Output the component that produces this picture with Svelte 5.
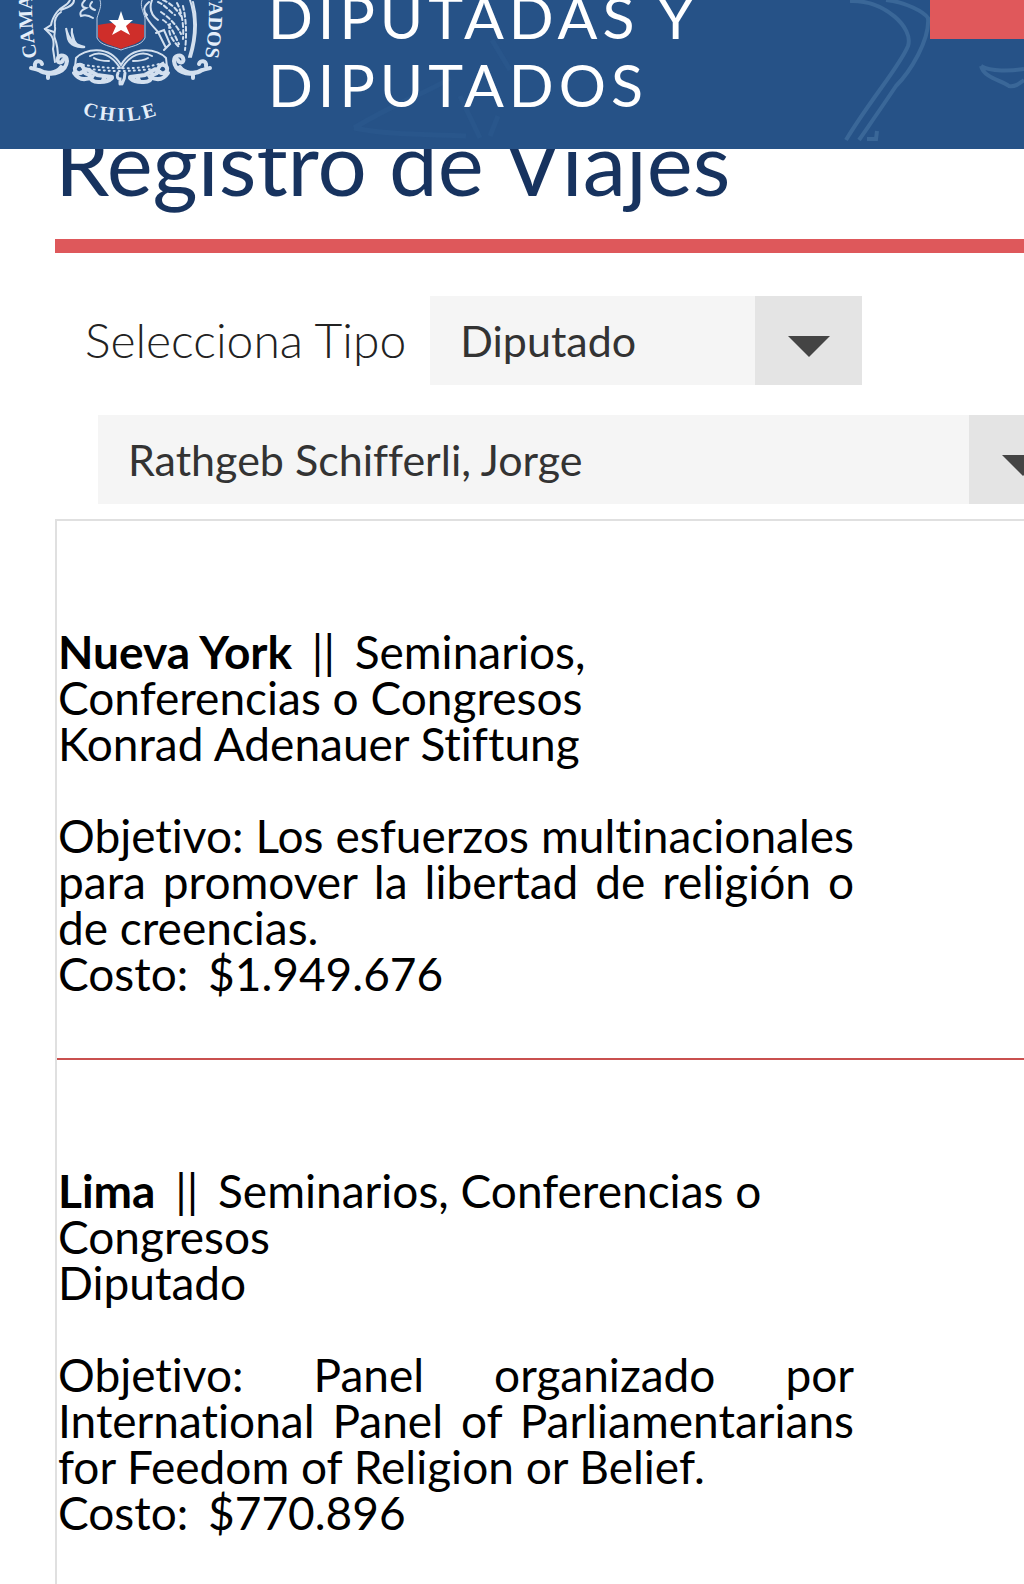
<script>
  const tipos = ["Diputado"];
  const diputados = ["Rathgeb Schifferli, Jorge"];

  let tipo = tipos[0];
  let diputado = diputados[0];

  const viajes = [
    {
      destino: "Nueva York",
      motivo: "Seminarios, Conferencias o Congresos",
      financia: "Konrad Adenauer Stiftung",
      objetivo: "Los esfuerzos multinacionales para promover la libertad de religión o de creencias.",
      costo: "$1.949.676"
    },
    {
      destino: "Lima",
      motivo: "Seminarios, Conferencias o Congresos",
      financia: "Diputado",
      objetivo: "Panel organizado por International Panel of Parliamentarians for Feedom of Religion or Belief.",
      costo: "$770.896"
    }
  ];
</script>

<header class="site-header">
  <svg class="watermark" viewBox="0 0 684 149" aria-hidden="true">
    <g fill="none" stroke="#3a6798" stroke-width="4">
      <path d="M510 1C545 0 574 28 568 46C560 66 530 100 506 140" />
      <path d="M546 0C566 2 584 12 588 18C590 40 570 72 556 86C544 104 530 124 519 140" />
      <path d="M527 139h9l1-8" />
      <path d="M641 66c10 6 30 5 43 3M641 66c3 12 20 14 28 20 6 1 10-2 15-6" />
    </g>
    <g fill="none" stroke="#29568b" stroke-width="5">
      <path d="M152 40l18 30M14 128C60 100 90 92 110 78M14 128c40 8 80 6 112 8M120 96l20 42M150 136l8-20" />
    </g>
  </svg>
  <a class="emblem" href="/">
    <svg viewBox="0 0 240 149" role="img" aria-label="Cámara de Diputadas y Diputados de Chile">
      <defs>
        <path id="arc-left" d="M37 57Q30 24 33 -20" />
        <path id="arc-right" d="M208 -20Q211 24 205 57" />
        <path id="arc-bottom" d="M70 109A112 112 0 0 0 172 109" />
      </defs>
      <g class="arc-text">
        <text><textPath href="#arc-left">CAMA</textPath></text>
        <text text-anchor="end"><textPath href="#arc-right" startOffset="100%">TADOS</textPath></text>
        <text text-anchor="middle" class="chile"><textPath href="#arc-bottom" startOffset="50%">CHILE</textPath></text>
      </g>

      <g class="line">
        <!-- huemul -->
        <path d="M74 0c0 6-8 8-13 10M70 0c-2 6-9 6-13 12-3 4-5 7-6 13l-6 4 5 5c4 4 4 10 3 15l2 13" />
        <path d="M61 12c-5 3-7 9-6 15 1 3-2 7 0 12 3 7 3 13 3 20M45 29l9 3" />
        <path d="M66 28c2 10 8 17 19 19-8 1-15-2-17-8zM72 29c-1 6 0 10 4 14" fill="#d3e0ef" />
        <path d="M85 0c-4 4-4 7 1 8-4 2-7 4-5 8 5-2 9 0 12 2M92 2c-3 3-3 6 3 8" />
        <!-- condor -->
        <path d="M190 0c6 18 5 38-1 57M193 2c5 18 3 38-2 55" />
        <path d="M149 2c-6 5-6 9-2 13M152 0c-3 8-1 15 6 20M145 14c3 8 8 12 13 18l8 16M156 33l8-3 6 14-6 6" />
        <path stroke-dasharray="4 3" d="M158 2c7 3 11 9 17 13M163 0c7 3 13 8 18 16M161 12c9 6 16 14 20 22M163 20c8 5 11 14 16 24M170 24c-3 8 2 16 9 23M183 6c3 12 4 28 2 44M177 3c5 9 7 23 6 36" />
        <!-- corner scrolls -->
        <path stroke-width="4" d="M31 68c6 1 10 3 15 5 8 2 20-1 21-12 0-6-7-7-9-3-2 5 4 6 5 2M35 66c-1-6 6-6 7-2M39 70c7 5 18 3 22-3M48 73v5" />
        <path stroke-width="4" d="M210 68c-6 1-10 3-15 5-8 2-20-1-21-12 0-6 7-7 9-3 2 5-4 6-5 2M206 66c1-6-6-6-7-2M202 70c-7 5-18 3-22-3M193 73v5" />
        <!-- ribbon -->
        <path d="M76 58c8-9 33-14 45 7 12-21 37-16 45-7M76 58l-1 9M166 58l1 9M90 56c10-6 22-1 30 12M152 56c-10-6-22-1-30 12M94 58c5 3 10 3 15 3M148 58c-5 3-10 3-15 3" />
        <path stroke-dasharray="1 4" d="M78 64c25 4 60 8 87-2M84 68c22 4 50 4 74 0" />
        <path stroke-width="4" d="M83 67c-2-4-9-2-8 3 1 4 6 4 7 2M74 73c6 9 14 6 18 4-4 6 14 7 20 1M90 75c-6-1-7-4-6-6 6 0 8 4 13 6l15 2M103 80l2-3" />
        <path stroke-width="4" d="M159 67c2-4 9-2 8 3-1 4-6 4-7 2M168 73c-6 9-14 6-18 4 4 6-14 7-20 1M152 75c6-1 7-4 6-6-6 0-8 4-13 6l-15 2M139 80l-2-3" />
        <path stroke-width="3" d="M118 73c-2 4 0 6 2 6v5M125 73c0 4 0 6-3 11" />
      </g>
      <!-- shield -->
      <path d="M100 0c2 6-1 11-3 18v20c4 8 14 8 24 12 10-4 20-4 24-12V18c-2-7-5-12-3-18" fill="#265287" stroke="#b9cbe2" />
      <path d="M98 25c15-3 31-3 46 0v12c-4 7-14 8-23 12-9-4-19-5-23-12z" fill="#cf2e2a" />
      <path d="M121 11l3 9h9l-7 6 4 9-9-5-9 5 4-9-7-6h9z" fill="#fff" />
    </svg>
  </a>
  <p class="brand">DIPUTADAS Y<br />DIPUTADOS</p>
  <button class="menu" aria-label="Menú"></button>
</header>

<main>
  <h1>Registro de Viajes</h1>

  <form class="filters">
    <div class="filter">
      <label for="tipo">Selecciona Tipo</label>
      <div class="select-box">
        <select id="tipo" bind:value={tipo}>
          {#each tipos as t}
            <option>{t}</option>
          {/each}
        </select>
        <span class="arrow"></span>
      </div>
    </div>
    <div class="select-box wide">
      <select aria-label="Diputado" bind:value={diputado}>
        {#each diputados as d}
          <option>{d}</option>
        {/each}
      </select>
      <span class="arrow"></span>
    </div>
  </form>

  <section class="results">
    {#each viajes as viaje}
      <article class="trip">
        <p><strong>{viaje.destino}</strong> <span class="divider">||</span> {viaje.motivo}</p>
        <p>{viaje.financia}</p>
        <p class="goal">Objetivo: {viaje.objetivo}</p>
        <p>Costo: <span class="cost">{viaje.costo}</span></p>
      </article>
    {/each}
  </section>
</main>

<style>
  :global(body) {
    background: #fff;
    font-family: Lato, "Liberation Sans", sans-serif;
    font-variant-ligatures: none;
    overflow: hidden;
  }

  .site-header {
    position: fixed;
    top: 0;
    left: 0;
    right: 0;
    z-index: 2;
    display: flex;
    align-items: flex-end;
    height: 149px;
    overflow: hidden;
    background: #265287;
  }
  .watermark {
    position: absolute;
    right: 0;
    bottom: 0;
    width: 684px;
    height: 149px;
  }
  .emblem {
    width: 240px;
    height: 149px;
  }
  .emblem svg {
    display: block;
  }
  .line {
    fill: none;
    stroke: #d3e0ef;
    stroke-width: 2;
    stroke-linecap: round;
  }
  .arc-text {
    fill: #e4eefa;
    font-family: "Liberation Serif", serif;
    font-size: 20px;
    font-weight: bold;
  }
  .chile {
    letter-spacing: 3px;
  }
  .brand {
    position: relative;
    flex: 1;
    margin: 0;
    padding: 0 0 30px 28px;
    color: #fff;
    font-size: 59px;
    line-height: 68px;
    letter-spacing: 5px;
  }
  .menu {
    position: relative;
    align-self: flex-start;
    width: 94px;
    height: 39px;
    border: 0;
    background: #e0585b;
  }

  main {
    padding: 111px 0 0 55px;
    overflow: hidden;
  }
  h1 {
    margin: 0;
    padding: 0 0 24px;
    border-bottom: 14px solid #de585b;
    color: #17335f;
    font-size: 87px;
    font-weight: 400;
    line-height: 104px;
  }

  .filters {
    display: flex;
    flex-direction: column;
    gap: 30px;
    padding: 43px 0 15px 30px;
  }
  .filter {
    display: flex;
    align-items: center;
    gap: 24px;
  }
  label {
    padding-bottom: 2px;
    color: #222;
    font-size: 48px;
    font-weight: 300;
  }
  .select-box {
    display: flex;
    position: relative;
    width: 432px;
    height: 89px;
  }
  .wide {
    width: auto;
    margin: 0 -52px 0 13px;
  }
  select {
    appearance: none;
    width: 100%;
    padding: 0 120px 0 30px;
    border: 0;
    border-radius: 0;
    background: #f5f5f5;
    color: #333;
    font-family: inherit;
    font-size: 43px;
    font-variant-ligatures: none;
  }
  .arrow {
    position: absolute;
    top: 0;
    right: 0;
    bottom: 0;
    display: grid;
    place-items: center;
    width: 107px;
    background: #e4e4e4;
    pointer-events: none;
  }
  .arrow::after {
    content: "";
    margin-top: 12px;
    border: solid transparent;
    border-width: 21px 21px 0;
    border-top-color: #444;
  }

  .results {
    margin-right: -55px;
    border: 2px solid #e0e0e0;
  }
  .trip {
    padding: 108px 0 61px 1px;
    border-bottom: 2px solid #c9504f;
    color: #000;
    font-size: 46px;
    line-height: 46px;
  }
  .trip p {
    max-width: 796px;
    margin: 0;
  }
  .trip .goal {
    margin-top: 46px;
    text-align: justify;
  }
  .divider {
    margin: 0 8px;
  }
  .cost {
    margin-left: 8px;
  }
</style>
